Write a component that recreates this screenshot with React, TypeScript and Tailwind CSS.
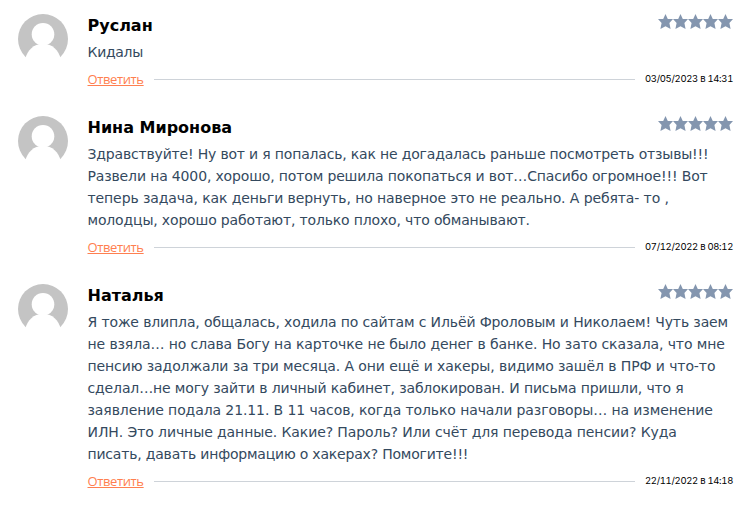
type Line = {
  text: string;
  tracking: string;
};

type Review = {
  id: number;
  name: string;
  date: string;
  lines: Line[];
};

const reviews: Review[] = [
  {
    id: 1,
    name: "Руслан",
    date: "03/05/2023 в 14:31",
    lines: [{ text: "Кидалы", tracking: "tracking-[-0.3px]" }],
  },
  {
    id: 2,
    name: "Нина Миронова",
    date: "07/12/2022 в 08:12",
    lines: [
      {
        text: "Здравствуйте! Ну вот и я попалась, как не догадалась раньше посмотреть отзывы!!!",
        tracking: "tracking-[-0.18px]",
      },
      {
        text: "Развели на 4000, хорошо, потом решила покопаться и вот…Спасибо огромное!!! Вот",
        tracking: "tracking-[-0.15px]",
      },
      {
        text: "теперь задача, как деньги вернуть, но наверное это не реально. А ребята- то ,",
        tracking: "tracking-[-0.1px]",
      },
      {
        text: "молодцы, хорошо работают, только плохо, что обманывают.",
        tracking: "tracking-[-0.16px]",
      },
    ],
  },
  {
    id: 3,
    name: "Наталья",
    date: "22/11/2022 в 14:18",
    lines: [
      {
        text: "Я тоже влипла, общалась, ходила по сайтам с Ильёй Фроловым и Николаем! Чуть заем",
        tracking: "tracking-[-0.13px]",
      },
      {
        text: "не взяла… но слава Богу на карточке не было денег в банке. Но зато сказала, что мне",
        tracking: "tracking-[-0.11px]",
      },
      {
        text: "пенсию задолжали за три месяца. А они ещё и хакеры, видимо зашёл в ПРФ и что-то",
        tracking: "tracking-[-0.1px]",
      },
      {
        text: "сделал…не могу зайти в личный кабинет, заблокирован. И письма пришли, что я",
        tracking: "tracking-[-0.14px]",
      },
      {
        text: "заявление подала 21.11. В 11 часов, когда только начали разговоры… на изменение",
        tracking: "tracking-[-0.1px]",
      },
      {
        text: "ИЛН. Это личные данные. Какие? Пароль? Или счёт для перевода пенсии? Куда",
        tracking: "tracking-[-0.09px]",
      },
      {
        text: "писать, давать информацию о хакерах? Помогите!!!",
        tracking: "tracking-[-0.2px]",
      },
    ],
  },
];

function Avatar() {
  return (
    <svg viewBox="0 0 50 50" className="h-[50px] w-[50px] shrink-0">
      <circle cx="25" cy="25" r="25" fill="#c4c4c4" />
      <circle cx="25" cy="20.2" r="11.3" fill="#fff" />
      <path d="M7 45C10 36 15 30 25 30s15 6 18 15v5H7z" fill="#fff" />
    </svg>
  );
}

function Stars() {
  return (
    <div className="flex">
      {[1, 2, 3, 4, 5].map((n) => (
        <svg key={n} viewBox="0 0 15 15" className="h-[15px] w-[15px]">
          <path
            fill="#8496af"
            d="M7.5 0 9.8 5H15L11.4 9l1.2 6-5.1-2.7L2.4 15 3.6 9 0 5h5.2z"
          />
        </svg>
      ))}
    </div>
  );
}

function ReviewItem({ review }: { review: Review }) {
  return (
    <article className="flex gap-[19.5px]">
      <Avatar />
      <div className="min-w-0 flex-1">
        <div className="flex h-[27px] items-start justify-between">
          <h3 className="pt-px font-['DejaVu_Sans',sans-serif] text-base leading-[22px] font-bold text-black">
            {review.name}
          </h3>
          <Stars />
        </div>
        <div className="font-['DejaVu_Sans',sans-serif] text-[14px] leading-[22px] whitespace-nowrap text-[#34495e]">
          {review.lines.map((line) => (
            <p key={line.text} className={line.tracking}>
              {line.text}
            </p>
          ))}
        </div>
        <div className="mt-[5px] flex h-[23px] items-center">
          <a
            href="#"
            className="w-[57px] font-['Open_Sans',sans-serif] text-[13px] tracking-[-0.38px] whitespace-nowrap text-[#ff7f50] underline"
          >
            Ответить
          </a>
          <span className="mr-2.5 ml-[9.5px] h-px flex-1 bg-[#ced3d9]" />
          <time className="w-[88px] font-['Inter',sans-serif] text-[9.5px] tracking-[-0.32px] whitespace-nowrap text-black tabular-nums">
            {review.date}
          </time>
        </div>
      </div>
    </article>
  );
}

export default function App() {
  return (
    <main className="flex h-[521px] w-[744px] flex-col gap-[25px] overflow-hidden bg-white pt-3.5 pr-[11px] pl-[18px]">
      {reviews.map((review) => (
        <ReviewItem key={review.id} review={review} />
      ))}
    </main>
  );
}
